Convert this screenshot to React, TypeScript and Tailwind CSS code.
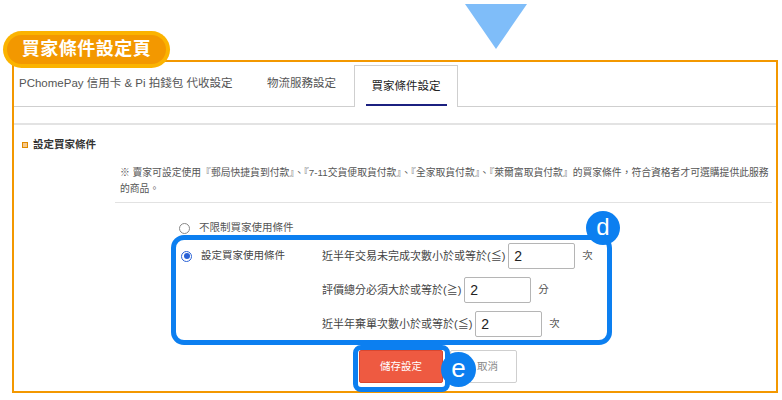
import React from "react";

const conditions = [
  { label: "近半年交易未完成次數小於或等於(≦)", value: "2", unit: "次" },
  { label: "評價總分必須大於或等於(≧)", value: "2", unit: "分" },
  { label: "近半年棄單次數小於或等於(≦)", value: "2", unit: "次" },
];

const TabBar = () => (
  <div className="flex items-end h-[45px] border-b border-[#cfcfcf]">
    <div className="w-[253px] h-full flex items-center pl-[5px] text-[11.5px] text-[#555] whitespace-nowrap">
      PChomePay 信用卡 &amp; Pi 拍錢包 代收設定
    </div>
    <div className="w-[87px] h-full flex items-center text-[11.5px] text-[#555] whitespace-nowrap">
      物流服務設定
    </div>
    <div className="w-[104px] h-[42px] -mb-px bg-white border-x border-t border-[#cfcfcf] flex flex-col justify-end items-center pb-[1px]">
      <span className="px-[6px] pb-[10px] leading-[16px] border-b-2 border-[#1b2080] text-[11.5px] text-[#222] whitespace-nowrap">
        買家條件設定
      </span>
    </div>
  </div>
);

const ConditionRow = ({ label, value, unit }: { label: string; value: string; unit: string }) => (
  <div className="flex items-center h-[26px]">
    <span className="text-[11px] text-[#444] whitespace-nowrap">{label}</span>
    <input
      readOnly
      value={value}
      className="ml-[3px] w-[67px] h-[26px] border border-[#b5b5b5] rounded-[2px] pl-[5px] text-[14px] text-[#222] outline-none"
    />
    <span className="ml-[7px] text-[10.5px] text-[#555]">{unit}</span>
  </div>
);

export default function App() {
  return (
    <div className="relative w-[782px] h-[400px] overflow-hidden bg-white font-['Liberation_Sans','Noto_Sans_CJK_TC',sans-serif]">
      {/* screenshot frame */}
      <div className="ml-[12px] mt-[60px] w-[766px] h-[333px] border-2 border-[#f39800] overflow-hidden">
        <TabBar />
        <div className="mt-[16px] border-t-2 border-[#e3e3e3]" />

        <div className="mt-[12px] h-[16px] flex items-center pl-[8px] gap-[5px]">
          <span className="w-[6px] h-[6px] border border-[#e08a00] bg-[#f7c98a]" />
          <span className="text-[10.5px] font-bold text-[#333]">設定買家條件</span>
        </div>

        <p className="mt-[12px] pl-[106px] text-[9.8px] leading-[16px] text-[#555] whitespace-nowrap">
          ※ 賣家可設定使用『郵局快捷貨到付款』、『7-11交貨便取貨付款』、『全家取貨付款』、『萊爾富取貨付款』的買家條件，符合資格者才可選購提供此服務
          <br />
          的商品。
        </p>

        <div className="mt-[5px] ml-[101px] mr-[4px] border-t border-[#e2e2e2]" />

        <div className="pl-[165px]">
          <div className="mt-[17px] h-[16px] flex items-center gap-[9px]">
            <span className="w-[11px] h-[11px] rounded-full border border-[#888] bg-white" />
            <span className="text-[10.5px] text-[#555]">不限制買家使用條件</span>
          </div>

          <div className="mt-[7px] flex">
            <div className="w-[143px] h-[26px] flex items-center pl-[2px] gap-[9px]">
              <span className="w-[11px] h-[11px] rounded-full border border-[#2a62d6] flex items-center justify-center">
                <span className="w-[6px] h-[6px] rounded-full bg-[#2a62d6]" />
              </span>
              <span className="text-[10.5px] text-[#444]">設定買家使用條件</span>
            </div>
            <div className="flex flex-col gap-[8px]">
              {conditions.map((c) => (
                <ConditionRow key={c.label} {...c} />
              ))}
            </div>
          </div>
        </div>

        <div className="mt-[13px] pl-[345px] flex gap-[7px]">
          <button className="w-[84px] h-[33px] bg-[#ee5a41] border border-[#d9472f] rounded-[2px] text-white text-[10.5px]">
            儲存設定
          </button>
          <button className="w-[67px] h-[33px] bg-white border border-[#cfcfcf] rounded-[2px] text-[#888] text-[10.5px] pl-[8px]">
            取消
          </button>
        </div>
      </div>

      {/* annotations */}
      <div className="absolute left-[3px] top-[31px] w-[167px] h-[37px] rounded-full bg-[#fbb300] p-[4px]">
        <div className="h-full rounded-full bg-[#f39800] flex items-center justify-center text-white text-[18px] font-bold tracking-[0.5px]">
          買家條件設定頁
        </div>
      </div>

      <svg className="absolute left-[465px] top-[4px]" width="62" height="45" viewBox="0 0 62 45">
        <polygon points="0,0 62,0 31,45" fill="#7fbdf9" />
      </svg>

      <div className="absolute left-[171px] top-[235px] w-[441px] h-[110px] border-[5px] border-[#0c7ff0] rounded-[13px]" />
      <div className="absolute left-[586px] top-[211px] w-[34px] h-[34px] rounded-full bg-[#0c7ff0] text-white text-[24px] leading-none flex items-center justify-center pb-[2px]">
        d
      </div>

      <div className="absolute left-[353px] top-[345px] w-[97px] h-[47px] border-[5px] border-[#0c7ff0] rounded-[8px]" />
      <div className="absolute left-[441px] top-[352px] w-[35px] h-[35px] rounded-full bg-[#0c7ff0] text-white text-[26px] leading-none flex items-center justify-center pb-[3px]">
        e
      </div>
    </div>
  );
}
